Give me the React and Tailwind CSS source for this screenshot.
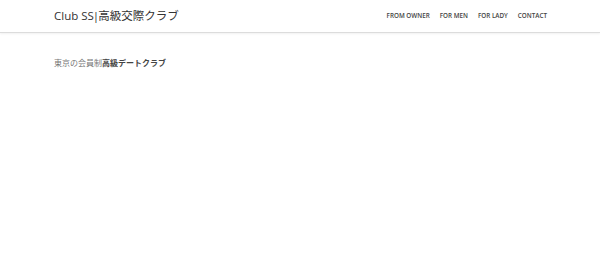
export default function App() {
  const links = ["FROM OWNER", "FOR MEN", "FOR LADY", "CONTACT"];

  return (
    <div
      className="min-h-[276px] w-[600px] bg-white"
      style={{ fontFamily: '"Open Sans", "Noto Sans CJK JP", sans-serif' }}
    >
      {/* Header */}
      <header className="flex h-[33px] items-center justify-between border-b border-[#dcdcdc] pl-[54px] pr-[53px] shadow-[0_1px_2px_rgba(0,0,0,0.06)]">
        <h1 className="text-[11.5px] font-normal leading-none text-[#333]">
          Club SS<span className="-mx-[1px]">|</span>高級交際クラブ
        </h1>

        <nav className="flex items-center gap-[10px]">
          {links.map((link) => (
            <a
              key={link}
              href="#"
              className="text-[6.3px] font-semibold text-[#444]"
            >
              {link}
            </a>
          ))}
        </nav>
      </header>

      <div className="pl-[54px] pt-[26px]">
        <p className="text-[8px] leading-none text-[#777]">
          東京の会員制<span className="font-bold text-[#444]">高級デートクラブ</span>
        </p>
      </div>
    </div>
  );
}
